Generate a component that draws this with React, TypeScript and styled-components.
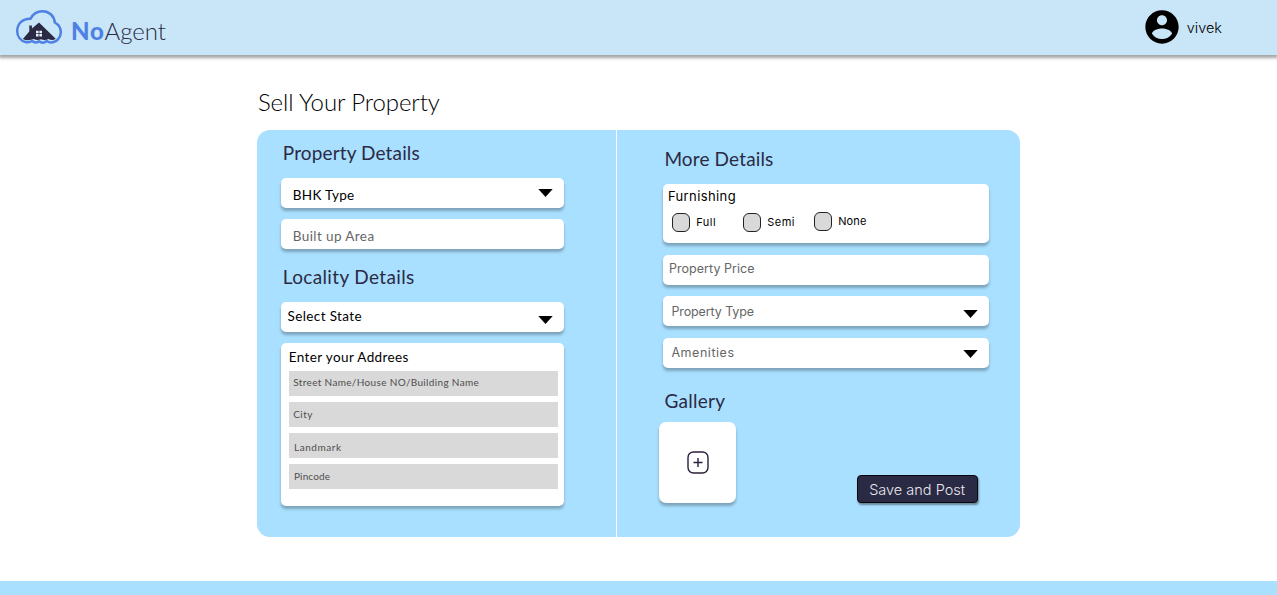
import React from "react";
import styled, { createGlobalStyle } from "styled-components";

const GlobalStyle = createGlobalStyle`
  *, *::before, *::after { box-sizing: border-box; }
  body { margin: 0; background: #fff; overflow: hidden; }
`;

const display = `"Lato", sans-serif`;
const body = `"Inter", sans-serif`;

const Page = styled.div`
  display: flex;
  flex-direction: column;
  height: 595px;
  color: #000;
`;

const Header = styled.header`
  display: flex;
  justify-content: space-between;
  height: 55px;
  flex: none;
  padding: 0 55px 0 15px;
  background: #c8e6f8;
  box-shadow: 0 2px 3px 1px rgba(0, 0, 0, 0.36);
`;

const Brand = styled.div`
  display: flex;
  align-items: flex-start;
`;

const CloudLogo = styled.svg`
  width: 48px;
  height: 36px;
  margin-top: 9px;
`;

const BrandName = styled.div`
  margin: 17px 0 0 8px;
  font: 300 24px/28px ${display};
  color: #2b2a45;
  white-space: nowrap;
`;

const BrandBold = styled.span`
  font-weight: 900;
  color: #4f80e4;
  letter-spacing: 0.7px;
`;

const User = styled.div`
  display: flex;
  align-items: flex-start;
`;

const Avatar = styled.svg`
  width: 40px;
  height: 40px;
  margin-top: 7px;
`;

const UserName = styled.span`
  margin: 18px 0 0 4.5px;
  font: 300 14.5px/20px ${body};
`;

const Main = styled.main`
  flex: 1;
  width: 763px;
  margin-left: 257px;
`;

const PageTitle = styled.h1`
  margin: 33px 0 0 1px;
  font: 300 24px/28px ${display};
  letter-spacing: -0.1px;
`;

const Panel = styled.div`
  display: grid;
  grid-template-columns: 358.6px 1fr;
  height: 406.4px;
  margin: 14.4px 0 0 0.4px;
  border-radius: 13px;
  background: #a9dfff;
`;

const Column = styled.section<{ $right?: boolean }>`
  display: flex;
  flex-direction: column;
  padding: ${(p) => (p.$right ? "17px 30.7px 0 45.9px" : "11px 51.9px 0 23.9px")};
  border-left: ${(p) => (p.$right ? "1.4px solid #fff" : "0")};
`;

const Heading = styled.h2<{ $top?: number; $gap: number; $spacing: number }>`
  margin: ${(p) => p.$top ?? 0}px 0 ${(p) => p.$gap}px 1.5px;
  font: 400 19px/24px ${display};
  letter-spacing: ${(p) => p.$spacing}px;
  color: #2b2a45;
`;

const Card = styled.div`
  border-radius: 5px;
  background: #fff;
  box-shadow: 0 3px 3px rgba(0, 0, 0, 0.27);
`;

const Field = styled(Card)<{ $gap?: number }>`
  display: flex;
  justify-content: space-between;
  height: 30px;
  flex: none;
  margin-bottom: ${(p) => p.$gap ?? 11}px;
`;

const Label = styled.span<{ $left: number; $top: number; $spacing: number; $muted?: boolean; $sans?: boolean }>`
  margin: ${(p) => p.$top}px 0 0 ${(p) => p.$left}px;
  font: 400 ${(p) => (p.$sans ? `12.5px/20px ${body}` : `13.5px/20px ${display}`)};
  letter-spacing: ${(p) => p.$spacing}px;
  color: ${(p) => (p.$muted ? "#666" : "#000")};
  white-space: nowrap;
`;

const CaretIcon = styled.svg<{ $top: number }>`
  width: 15px;
  height: 8px;
  margin: ${(p) => p.$top}px 11.6px 0 0;
`;

const AddressCard = styled(Card)`
  display: flex;
  flex-direction: column;
  height: 163px;
  padding: 4px 6px 0 7.5px;
`;

const AddressTitle = styled(Label)`
  margin-bottom: 3.4px;
`;

const AddressLine = styled.div<{ $top: number; $left?: number; $spacing: number }>`
  height: 25px;
  margin-bottom: 6.1px;
  padding: ${(p) => p.$top}px 0 0 ${(p) => p.$left ?? 4.5}px;
  background: #d9d9d9;
  font: 400 10px/16px ${display};
  letter-spacing: ${(p) => p.$spacing}px;
  color: #4e4e4e;
`;

const FurnishingCard = styled(Card)`
  height: 59.5px;
  margin-bottom: 11.5px;
  padding-top: 2px;
`;

const FurnishingTitle = styled.div`
  padding-left: 5px;
  font: 400 13px/20px ${body};
  letter-spacing: 0.4px;
`;

const Options = styled.div`
  display: flex;
  margin: 7px 0 0 8.8px;
`;

const Option = styled.label<{ $raise?: number; $spacing: number }>`
  display: flex;
  align-items: center;
  gap: 6.5px;
  width: 71px;
  height: 19px;
  margin-top: ${(p) => -(p.$raise ?? 0)}px;
  font: 400 11px/19px ${body};
  letter-spacing: ${(p) => p.$spacing}px;
`;

const CheckSquare = styled.span`
  width: 18px;
  height: 19px;
  border: 1.2px solid #222;
  border-radius: 6px;
  background: #d9d9d9;
`;

const Bottom = styled.div`
  display: flex;
  justify-content: space-between;
  align-items: flex-start;
  margin-left: -4px;
`;

const UploadTile = styled(Card)`
  display: flex;
  align-items: center;
  justify-content: center;
  width: 77px;
  height: 81px;
  padding: 1px 0 0 1px;
  border-radius: 7px;
`;

const SaveButton = styled.button`
  width: 121px;
  height: 28px;
  margin: 53px 11.7px 0 0;
  padding: 2px 0 0;
  border: 1.3px solid #07070d;
  border-radius: 4px;
  background: #2b2a45;
  box-shadow: 1px 2px 2px rgba(0, 0, 0, 0.4);
  color: #e8e8ee;
  font: 300 14.5px/24px ${body};
`;

const Footer = styled.footer`
  height: 14px;
  background: #a9dfff;
`;

const Caret = ({ top }: { top: number }) => (
  <CaretIcon $top={top} viewBox="0 0 15 8">
    <path d="M.3 0h14.4L7.5 8z" />
  </CaretIcon>
);

export default function App() {
  return (
    <Page>
      <GlobalStyle />
      <Header>
        <Brand>
          <CloudLogo viewBox="0 0 48 36">
            <path
              d="M10.500 33C5.500 31.800 2.200 27.500 2.200 22 2.200 14.500 8 9.300 15.500 9.700 18 4.800 22.300 2.200 27.500 2.200c6.500 0 11.500 4.300 12.300 11.300 4 2.200 6.200 5.800 6 10.200-.3 5.600-4.600 9.800-9.800 9.800-1.800 0-3-.5-4.300-1.500-2.400 2-5.600 2-7.700.3-2.300 1.700-5 1.400-7-.2-1.700 1.200-3.900 1.600-6.500.9z"
              fill="none"
              stroke="#4f80e4"
              strokeWidth="2.500"
            />
            <path d="M7.800 30 14.300 22.500v-6h2.600V19.500L24 13.500 40.700 29.800c-2 1.500-4.800 1.700-7.200.3-2.500 1.300-5.300 1.200-7.500.2-2.500 1.100-5 1-7.300-.2-3.500 1.500-7.700 1.500-10.900-.1z" fill="#2b2a45" />
            <path d="M21 21.800h2.600v2.400H21zm3.400 0H27v2.400h-2.600zM21 25h2.600v2.400H21zm3.400 0H27v2.400h-2.600z" fill="#e4f1fa" />
          </CloudLogo>
          <BrandName>
            <BrandBold>No</BrandBold>Agent
          </BrandName>
        </Brand>
        <User>
          <Avatar viewBox="0 0 24 24">
            <path d="M12 2C6.480 2 2 6.480 2 12s4.480 10 10 10 10-4.480 10-10S17.520 2 12 2zm0 3c1.660 0 3 1.340 3 3s-1.340 3-3 3-3-1.340-3-3 1.340-3 3-3zm0 14.200c-2.500 0-4.710-1.280-6-3.220.03-1.990 4-3.080 6-3.080 1.990 0 5.970 1.090 6 3.080-1.290 1.940-3.500 3.220-6 3.220z" />
          </Avatar>
          <UserName>vivek</UserName>
        </User>
      </Header>
      <Main>
        <PageTitle>Sell Your Property</PageTitle>
        <Panel>
          <Column>
            <Heading $gap={13} $spacing={0.13}>Property Details</Heading>
            <Field>
              <Label $left={11.5} $top={7} $spacing={0.28}>BHK Type</Label>
              <Caret top={11} />
            </Field>
            <Field>
              <Label $left={11.5} $top={7} $spacing={0.4} $muted>Built up Area</Label>
            </Field>
            <Heading $top={5} $gap={13} $spacing={0.35}>Locality Details</Heading>
            <Field>
              <Label $left={6.3} $top={4} $spacing={0.38}>Select State</Label>
              <Caret top={14} />
            </Field>
            <AddressCard>
              <AddressTitle $left={0} $top={0} $spacing={0.38}>Enter your Addrees</AddressTitle>
              <AddressLine $top={3.5} $spacing={0.34}>Street Name/House NO/Building Name</AddressLine>
              <AddressLine $top={4} $spacing={0.4}>City</AddressLine>
              <AddressLine $top={6.5} $left={5.2} $spacing={0.55}>Landmark</AddressLine>
              <AddressLine $top={4} $left={5.2} $spacing={0.15}>Pincode</AddressLine>
            </AddressCard>
          </Column>
          <Column $right>
            <Heading $gap={12.5} $spacing={0.14}>More Details</Heading>
            <FurnishingCard>
              <FurnishingTitle>Furnishing</FurnishingTitle>
              <Options>
                <Option $spacing={0.5}><CheckSquare />Full</Option>
                <Option $spacing={0.5}><CheckSquare />Semi</Option>
                <Option $spacing={0.15} $raise={1}><CheckSquare />None</Option>
              </Options>
            </FurnishingCard>
            <Field>
              <Label $left={6} $top={4.4} $spacing={0.05} $muted $sans>Property Price</Label>
            </Field>
            <Field $gap={12}>
              <Label $left={8.5} $top={6} $spacing={-0.1} $muted $sans>Property Type</Label>
              <Caret top={14} />
            </Field>
            <Field>
              <Label $left={8.5} $top={5} $spacing={0.55} $muted $sans>Amenities</Label>
              <Caret top={12} />
            </Field>
            <Heading $top={10} $gap={9} $spacing={0.29}>Gallery</Heading>
            <Bottom>
              <UploadTile>
                <svg width="22" height="23" viewBox="0 0 22 23" fill="none" stroke="#2b1f3d" strokeWidth="1.400">
                  <rect x="1" y="1" width="20" height="21" rx="5.500" />
                  <path d="M11 7v9M6.500 11.500h9" />
                </svg>
              </UploadTile>
              <SaveButton>Save and Post</SaveButton>
            </Bottom>
          </Column>
        </Panel>
      </Main>
      <Footer />
    </Page>
  );
}
